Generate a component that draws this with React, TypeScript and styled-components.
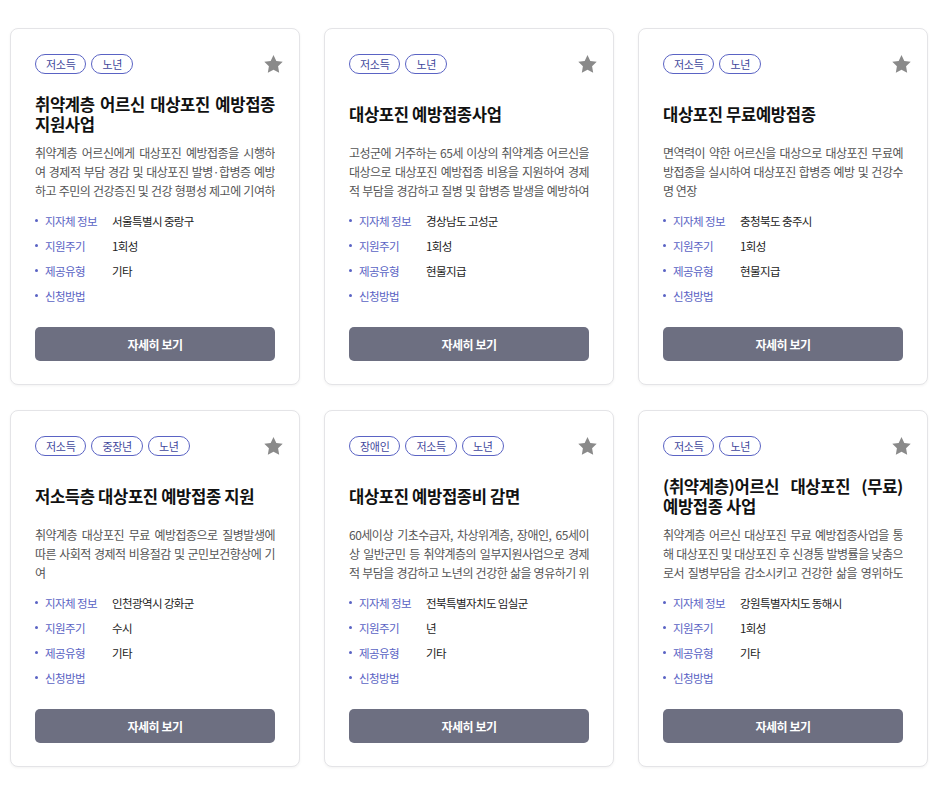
import React from "react";
import styled, { createGlobalStyle } from "styled-components";

const Global = createGlobalStyle`
  html, body { margin: 0; padding: 0; background: #ffffff; }
  body { font-family: "Noto Sans CJK KR", "Noto Sans", sans-serif; color: #222; }
  * { box-sizing: border-box; }
`;

type Item = {
  tags: string[];
  title: string;
  desc: string;
  region: string;
  cycle: string;
  kind: string;
};

const items: Item[] = [
  {
    tags: ["저소득", "노년"],
    title: "취약계층 어르신 대상포진 예방접종 지원사업",
    desc: "취약계층 어르신에게 대상포진 예방접종을 시행하여 경제적 부담 경감 및 대상포진 발병·합병증 예방하고 주민의 건강증진 및 건강 형평성 제고에 기여하고자 함",
    region: "서울특별시 중랑구",
    cycle: "1회성",
    kind: "기타",
  },
  {
    tags: ["저소득", "노년"],
    title: "대상포진 예방접종사업",
    desc: "고성군에 거주하는 65세 이상의 취약계층 어르신을 대상으로 대상포진 예방접종 비용을 지원하여 경제적 부담을 경감하고 질병 및 합병증 발생을 예방하여 건강한 노후생활 지원",
    region: "경상남도 고성군",
    cycle: "1회성",
    kind: "현물지급",
  },
  {
    tags: ["저소득", "노년"],
    title: "대상포진 무료예방접종",
    desc: "면역력이 약한 어르신을 대상으로 대상포진 무료예방접종을 실시하여 대상포진 합병증 예방 및 건강수명 연장",
    region: "충청북도 충주시",
    cycle: "1회성",
    kind: "현물지급",
  },
  {
    tags: ["저소득", "중장년", "노년"],
    title: "저소득층 대상포진 예방접종 지원",
    desc: "취약계층 대상포진 무료 예방접종으로 질병발생에 따른 사회적 경제적 비용절감 및 군민보건향상에 기여",
    region: "인천광역시 강화군",
    cycle: "수시",
    kind: "기타",
  },
  {
    tags: ["장애인", "저소득", "노년"],
    title: "대상포진 예방접종비 감면",
    desc: "60세이상 기초수급자, 차상위계층, 장애인, 65세이상 일반군민 등 취약계층의 일부지원사업으로 경제적 부담을 경감하고 노년의 건강한 삶을 영유하기 위함",
    region: "전북특별자치도 임실군",
    cycle: "년",
    kind: "기타",
  },
  {
    tags: ["저소득", "노년"],
    title: "(취약계층)어르신 대상포진 (무료)예방접종 사업",
    desc: "취약계층 어르신 대상포진 무료 예방접종사업을 통해 대상포진 및 대상포진 후 신경통 발병률을 낮춤으로서 질병부담을 감소시키고 건강한 삶을 영위하도록 함",
    region: "강원특별자치도 동해시",
    cycle: "1회성",
    kind: "기타",
  },
];

const Grid = styled.div`
  display: grid;
  grid-template-columns: repeat(3, 290px);
  column-gap: 24px;
  row-gap: 25px;
  padding: 28px 0 20px 10px;
`;

const Card = styled.article`
  display: flex;
  flex-direction: column;
  border: 1px solid #e4e4e7;
  border-radius: 8px;
  background: #fff;
  box-shadow: 0 1px 3px rgba(0, 0, 0, 0.05);
  padding: 25px 24px 23px 24px;
`;

const Header = styled.div`
  display: flex;
  align-items: center;
  justify-content: space-between;
  height: 20px;
`;

const Tags = styled.div`
  display: flex;
  gap: 5px;
`;

const Tag = styled.span`
  display: inline-flex;
  align-items: center;
  height: 20px;
  padding: 0 10px;
  border: 1px solid #5a63c4;
  border-radius: 10px;
  font-size: 11px;
  letter-spacing: -0.3px;
  color: #3f479c;
  line-height: 1;
`;

const StarButton = styled.button`
  display: flex;
  align-items: center;
  justify-content: center;
  width: 24px;
  height: 24px;
  padding: 0;
  margin-right: -10px;
  border: 0;
  background: none;
  color: #8a8a8a;
`;

const TitleBox = styled.div`
  display: flex;
  align-items: center;
  height: 40px;
  margin-top: 20px;
`;

const Title = styled.h3`
  margin: 0;
  width: 100%;
  font-size: 16.6px;
  font-weight: 700;
  letter-spacing: -0.35px;
  line-height: 20px;
  color: #111;
  text-align: justify;
  word-break: keep-all;
`;

const Desc = styled.p`
  margin: 9px 0 0;
  height: 57px;
  overflow: hidden;
  font-size: 12px;
  letter-spacing: -0.5px;
  line-height: 19px;
  color: #555;
  text-align: justify;
`;

const InfoList = styled.ul`
  list-style: none;
  margin: 8px 0 0;
  padding: 0;
`;

const InfoRow = styled.li`
  display: flex;
  align-items: center;
  height: 25px;
  font-size: 11.5px;
  letter-spacing: -0.6px;
`;

const Dot = styled.span`
  width: 3px;
  height: 3px;
  border-radius: 50%;
  background: #5a63c4;
  margin: 0 7px 0 0;
  flex: none;
`;

const Label = styled.span`
  width: 67px;
  flex: none;
  color: #5a63c4;
  white-space: nowrap;
`;

const Value = styled.span`
  color: #222;
  white-space: nowrap;
`;

const DetailButton = styled.button`
  margin-top: 19px;
  height: 34px;
  width: 100%;
  border: 0;
  border-radius: 5px;
  background: #6d6f81;
  color: #fff;
  font-family: inherit;
  font-size: 12px;
  font-weight: 700;
  letter-spacing: -0.5px;
  cursor: pointer;
`;

const Star = () => (
  <svg width="23" height="23" viewBox="0 0 24 24" fill="currentColor" aria-hidden>
    <path d="M12 2.2l2.95 6.1 6.65.95-4.82 4.68 1.15 6.62L12 17.4l-5.93 3.15 1.15-6.62L2.4 9.25l6.65-.95L12 2.2z" />
  </svg>
);

const PolicyCard = ({ item }: { item: Item }) => (
  <Card>
    <Header>
      <Tags>
        {item.tags.map((t) => (
          <Tag key={t}>{t}</Tag>
        ))}
      </Tags>
      <StarButton aria-label="즐겨찾기">
        <Star />
      </StarButton>
    </Header>
    <TitleBox>
      <Title>{item.title}</Title>
    </TitleBox>
    <Desc>{item.desc}</Desc>
    <InfoList>
      <InfoRow>
        <Dot />
        <Label>지자체 정보</Label>
        <Value>{item.region}</Value>
      </InfoRow>
      <InfoRow>
        <Dot />
        <Label>지원주기</Label>
        <Value>{item.cycle}</Value>
      </InfoRow>
      <InfoRow>
        <Dot />
        <Label>제공유형</Label>
        <Value>{item.kind}</Value>
      </InfoRow>
      <InfoRow>
        <Dot />
        <Label>신청방법</Label>
      </InfoRow>
    </InfoList>
    <DetailButton>자세히 보기</DetailButton>
  </Card>
);

export default function App() {
  return (
    <>
      <Global />
      <Grid>
        {items.map((it, i) => (
          <PolicyCard key={i} item={it} />
        ))}
      </Grid>
    </>
  );
}
